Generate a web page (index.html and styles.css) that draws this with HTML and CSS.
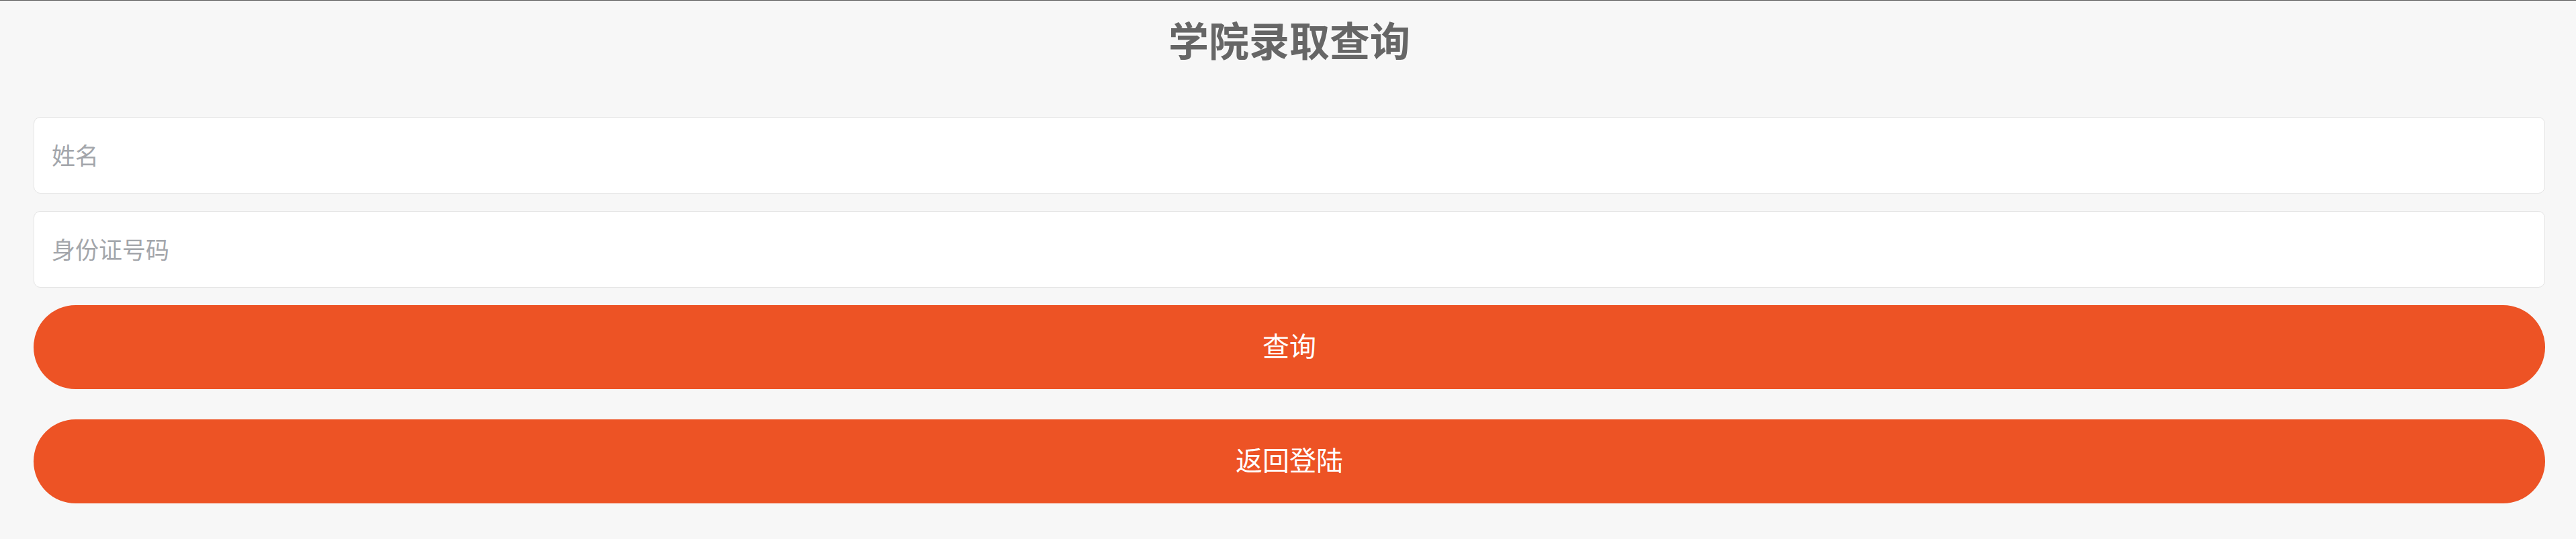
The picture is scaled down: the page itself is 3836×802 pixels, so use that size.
FILE: index.html
```html
<!DOCTYPE html>
<html lang="zh-CN">
<head>
    <meta charset="UTF-8">
    <meta name="viewport" content="width=device-width, initial-scale=1.0">
    <title>学院录取查询</title>
    <link rel="stylesheet" href="styles.css">
</head>
<body>
    <div class="page">
        <h1 class="title">学院录取查询</h1>
        <form class="query-form" onsubmit="return false;">
            <input type="text" class="field" id="name" placeholder="姓名">
            <input type="text" class="field" id="idNumber" placeholder="身份证号码">
            <button type="submit" class="btn btn-query">查询</button>
            <button type="button" class="btn btn-back">返回登陆</button>
        </form>
    </div>
</body>
</html>
```

FILE: styles.css
```css
body {
    margin: 0;
    font-family: "Noto Sans", "Noto Sans CJK SC", sans-serif;
    background-color: #f7f7f7;
    border-top: 1px solid #5c5c5c;
    min-height: 801px;
}
.page {
    padding: 20px 46px 0 50px;
}
.title {
    margin: 0;
    height: 80px;
    line-height: 80px;
    text-align: center;
    font-size: 60px;
    font-weight: bold;
    color: #666666;
}
.query-form {
    display: flex;
    flex-direction: column;
    margin-top: 73px;
}
.field {
    box-sizing: border-box;
    height: 114px;
    margin-bottom: 26px;
    padding: 0 26px;
    font-family: "Noto Sans", "Noto Sans CJK SC", sans-serif;
    font-size: 35px;
    color: #333333;
    background-color: #ffffff;
    border: 1px solid #e3e3e3;
    border-radius: 10px;
    outline: none;
}
.field::placeholder {
    color: #a3a6ab;
}
.btn {
    box-sizing: border-box;
    height: 125px;
    padding: 0 0 8px;
    border: none;
    border-radius: 63px;
    background-color: #ed5325;
    color: #ffffff;
    font-family: "Noto Sans", "Noto Sans CJK SC", sans-serif;
    font-size: 40px;
    cursor: pointer;
}
.btn-query {
    margin-bottom: 45px;
}
```
